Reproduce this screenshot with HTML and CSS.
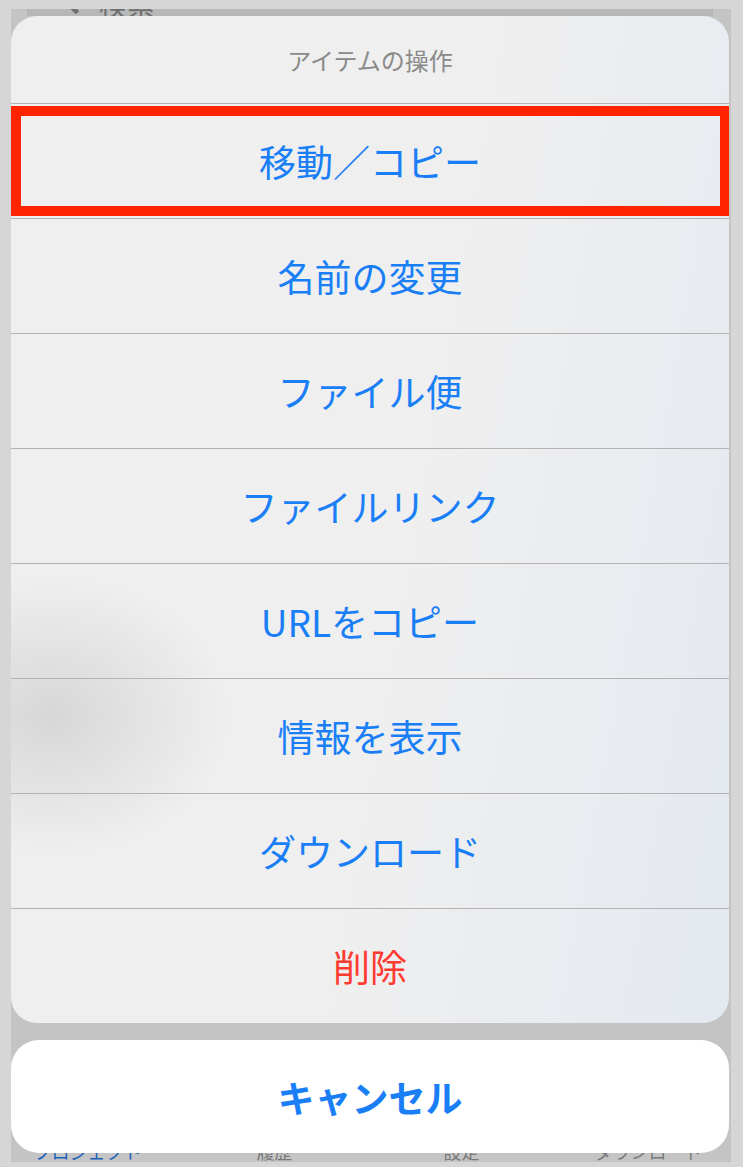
FILE: index.html
```html
<!DOCTYPE html>
<html lang="ja">
<head>
  <meta charset="UTF-8" />
  <title>アイテムの操作</title>
  <link rel="stylesheet" href="styles.css">
</head>
<body>
  <div class="screen">
    <!-- conteúdo atrás do menu -->
    <div class="search-bar">
      <svg class="search-icon" width="34" height="34" viewBox="0 0 34 34">
        <circle cx="13" cy="13" r="10" fill="none" stroke="#6f6f6f" stroke-width="4"/>
        <line x1="20" y1="20" x2="31" y2="31" stroke="#6f6f6f" stroke-width="5" stroke-linecap="round"/>
      </svg>
      <span class="search-text">検索</span>
    </div>

    <div class="tab-bar">
      <span class="tab active">プロジェクト</span>
      <span class="tab">履歴</span>
      <span class="tab">設定</span>
      <span class="tab">ダウンロード</span>
    </div>

    <!-- action sheet -->
    <div class="overlay">
      <div class="sheet">
        <div class="sheet-title">アイテムの操作</div>
        <div class="sheet-row marked">移動／コピー<span class="mark"></span></div>
        <div class="sheet-row">名前の変更</div>
        <div class="sheet-row">ファイル便</div>
        <div class="sheet-row">ファイルリンク</div>
        <div class="sheet-row">URLをコピー</div>
        <div class="sheet-row">情報を表示</div>
        <div class="sheet-row">ダウンロード</div>
        <div class="sheet-row danger">削除</div>
      </div>
      <div class="cancel">キャンセル</div>
    </div>
  </div>
</body>
</html>
```

FILE: styles.css
```css
* { box-sizing: border-box; }
body {
  margin: 0; background: #d6d6d6;
  font-family: 'Noto Sans CJK JP', 'Noto Sans', sans-serif;
  width: 743px; height: 1167px; overflow: hidden;
}
.screen {
  position: relative; margin: 9px 12px 0 11px;
  width: 720px; height: 1153px; background: #c4c4c4;
  overflow: hidden; display: flex; flex-direction: column;
  justify-content: space-between;
}
.search-bar {
  margin: -30px 18px 0 16px; height: 37px; background: #b7b7b7;
  display: flex; align-items: flex-end; gap: 20px; padding-left: 18px;
}
.search-icon { margin-bottom: 2px; }
.search-text {
  font-size: 28px; color: #6f6f6f; line-height: 1; margin-bottom: -2px;
}
.tab-bar {
  display: grid; grid-template-columns: repeat(4, 187px);
  justify-items: center; align-items: end;
  margin-left: -17px; height: 30px;
}
.tab {
  font-size: 18px; line-height: 1; color: #7a7a7a; margin-bottom: 2px;
}
.tab.active { color: #1a5fbd; }

.overlay {
  position: absolute; top: 7px; left: 0; width: 718px;
  display: flex; flex-direction: column; gap: 17px;
}
.sheet {
  border-radius: 26px; overflow: hidden;
  background:
    radial-gradient(ellipse 180px 140px at 40px 700px, rgba(0,0,0,.1), rgba(0,0,0,0)),
    linear-gradient(100deg, rgba(255,255,255,0) 55%, rgba(214,226,242,.45) 100%),
    #efefef;
}
.sheet-title {
  height: 87px; display: flex; align-items: center; justify-content: center;
  font-size: 24px; color: #8a8a8a;
}
.sheet-row {
  position: relative; height: 115px; border-top: 1px solid #b3b3b3;
  display: flex; align-items: center; justify-content: center;
  font-size: 37px; color: #1a7ff6;
}
.sheet-row.danger { color: #fe3b30; }
.mark {
  position: absolute; top: 2px; bottom: 2px; left: 0; right: -1px;
  border: 10px solid #ff2400;
}
.cancel {
  height: 113px; border-radius: 28px; background: #fff;
  display: flex; align-items: center; justify-content: center;
  font-size: 37px; font-weight: bold; color: #1a7ff6;
}
```
